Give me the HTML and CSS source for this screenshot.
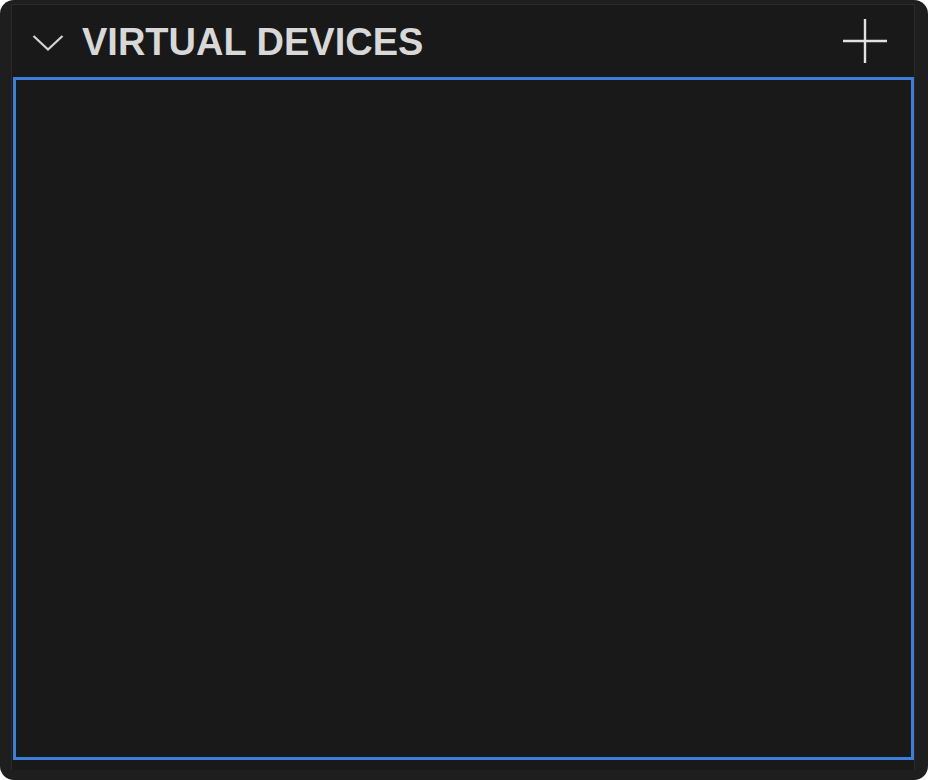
FILE: index.html
```html
<!DOCTYPE html>
<html lang="en">
<head>
    <meta charset="UTF-8">
    <meta name="viewport" content="width=device-width, initial-scale=1.0">
    <title>Virtual Devices</title>
    <link rel="stylesheet" href="styles.css">
</head>
<body>
    <div class="frame">
        <div class="panel">
            <div class="panel-header">
                <svg class="chevron" width="32" height="18" viewBox="0 0 32 18">
                    <path d="M1.5 2 L16 15.5 L30.5 2" fill="none" stroke="#d2d2d2" stroke-width="2.3"/>
                </svg>
                <span class="panel-title">VIRTUAL DEVICES</span>
                <svg class="add" width="46" height="46" viewBox="0 0 46 46">
                    <path d="M23 1 V45 M1 23 H45" fill="none" stroke="#e2e2e2" stroke-width="2.4"/>
                </svg>
            </div>
            <div class="device-list"></div>
        </div>
    </div>
</body>
</html>
```

FILE: styles.css
```css
html, body {
    margin: 0;
    background: #ffffff;
}

body {
    font-family: "Liberation Sans", Arial, sans-serif;
}

.frame {
    width: 928px;
    height: 780px;
    box-sizing: border-box;
    padding: 4px 13px 10px 11px;
    background: #1e1e1e;
    border-radius: 14px;
    display: flex;
}

.panel {
    flex: 1;
    display: flex;
    flex-direction: column;
    background: #191919;
    border: 1px solid #2a2a2a;
    border-bottom: none;
}

.panel-header {
    height: 72px;
    display: flex;
    align-items: center;
    padding: 0 26px 0 20px;
}

.chevron {
    margin-top: 4px;
}

.panel-title {
    margin-left: 18px;
    font-size: 38px;
    font-weight: bold;
    color: #d8d8d8;
    flex: 1;
    margin-top: 2px;
}

.add {
    margin-bottom: 1px;
}

.device-list {
    flex: 1;
    margin: 0 0 10px 1px;
    border: 3px solid #3b7fdc;
    background: #191919;
}
```
